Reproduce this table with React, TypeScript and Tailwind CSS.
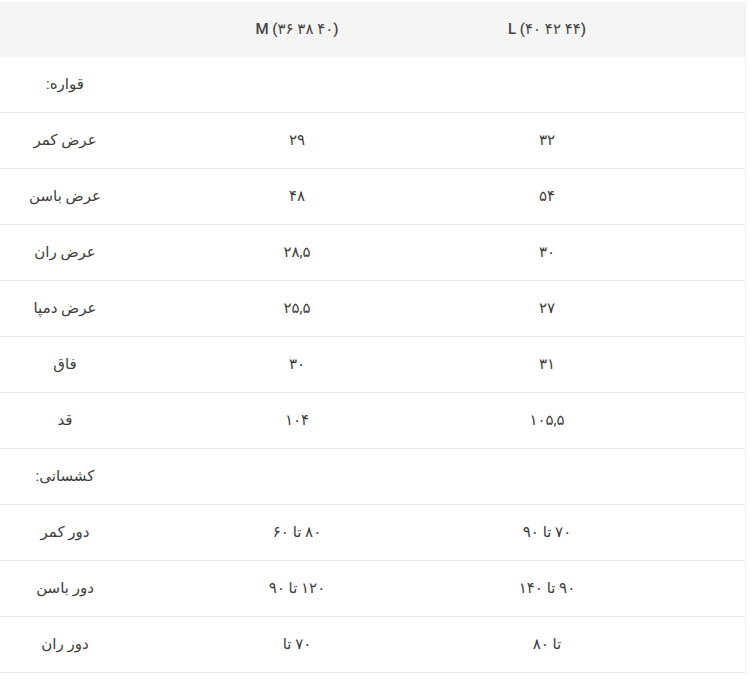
import React from 'react';

type Row = { label: string; m?: string; l?: string };

const rows: Row[] = [
  { label: 'قواره:' },
  { label: 'عرض کمر', m: '۲۹', l: '۳۲' },
  { label: 'عرض باسن', m: '۴۸', l: '۵۴' },
  { label: 'عرض ران', m: '۲۸,۵', l: '۳۰' },
  { label: 'عرض دمپا', m: '۲۵,۵', l: '۲۷' },
  { label: 'فاق', m: '۳۰', l: '۳۱' },
  { label: 'قد', m: '۱۰۴', l: '۱۰۵,۵' },
  { label: 'کشسانی:' },
  { label: 'دور کمر', m: '۸۰ تا ۶۰', l: '۷۰ تا ۹۰' },
  { label: 'دور باسن', m: '۱۲۰ تا ۹۰', l: '۹۰ تا ۱۴۰' },
  { label: 'دور ران', m: '۷۰ تا', l: 'تا ۸۰' },
];

const font = { fontFamily: 'Roboto, "DejaVu Sans", sans-serif' };

export default function App() {
  return (
    <div className="w-[750px] h-[680px] bg-white pt-[2px]" style={font}>
      <div className="w-[746px] border-r border-[#f2f2f2] text-[15px] text-[#3d3d3d]">
        <div className="grid grid-cols-[130px_334px_166px_1fr] h-[55px] bg-[#f5f5f5] items-center text-center font-medium text-[#444]">
          <div />
          <div dir="ltr">M (۳۶ ۳۸ ۴۰)</div>
          <div dir="ltr">L (۴۰ ۴۲ ۴۴)</div>
          <div />
        </div>
        {rows.map((row, i) => (
          <div
            key={i}
            className="grid grid-cols-[130px_334px_166px_1fr] h-[56px] border-b border-[#e9e9e9] items-center text-center"
          >
            <div dir="rtl">{row.label}</div>
            <div dir="rtl">{row.m}</div>
            <div dir="rtl">{row.l}</div>
            <div />
          </div>
        ))}
      </div>
    </div>
  );
}
